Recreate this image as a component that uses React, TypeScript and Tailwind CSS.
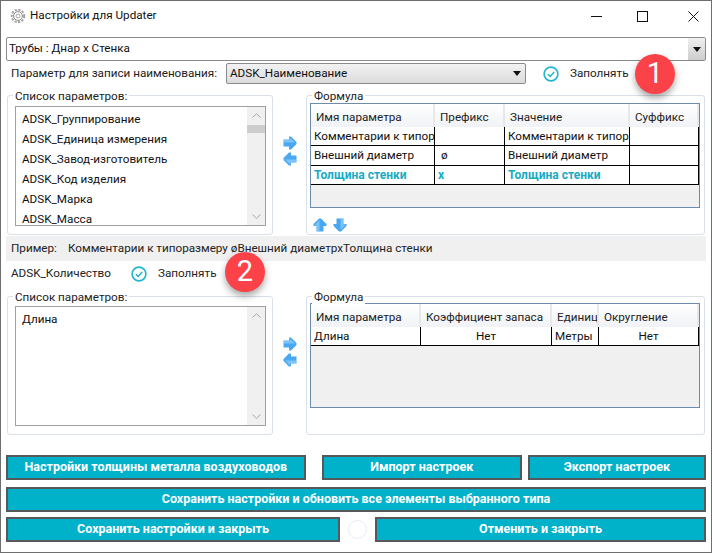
import React from "react";

type Cell = { text: string; center?: boolean };

function ArrowIcon({ rotate }: { rotate: "right" | "left" | "up" | "down" }) {
  const angle = { right: 0, left: 180, up: 270, down: 90 }[rotate];
  return (
    <svg width="14" height="14" viewBox="0 0 14 14" className="block">
      <g transform={`rotate(${angle} 7 7)`}>
        <path d="M0.5 3.5H6V0.5H8L13.5 6V8L8 13.5H6V10.5H0.5Z" fill="#4aa8f2" />
        <path d="M1 4H6.5V1.5L12 6.4H1Z" fill="#7cc4f8" />
      </g>
    </svg>
  );
}

function CheckCircle() {
  return (
    <svg width="16" height="16" viewBox="0 0 16 16" className="block shrink-0">
      <circle cx="8" cy="8" r="6.9" fill="none" stroke="#22b5cf" strokeWidth="1.6" />
      <path d="M4.8 8.2L7.2 10.4L11.2 6" fill="none" stroke="#22b5cf" strokeWidth="1.5" />
    </svg>
  );
}

function Gear() {
  return (
    <svg width="16" height="16" viewBox="0 0 16 16" className="block">
      <circle cx="8" cy="8" r="6.2" fill="none" stroke="#a0a0a0" strokeWidth="2" strokeDasharray="2.2 1.4" />
      <circle cx="8" cy="8" r="4.4" fill="none" stroke="#8a8a8a" strokeWidth="1" />
      <circle cx="8" cy="8" r="2" fill="none" stroke="#a5a5a5" strokeWidth="1" />
    </svg>
  );
}

function ComboArrow() {
  return (
    <svg width="8" height="5" viewBox="0 0 8 5" className="block">
      <path d="M0 0H8L4 5Z" fill="#111" />
    </svg>
  );
}

function Badge({ n, className }: { n: string; className: string }) {
  return (
    <div
      className={`absolute flex h-[40px] w-[40px] items-center justify-center rounded-full bg-[#fb4249] text-[29px] text-white shadow-[0_4px_7px_rgba(0,0,0,0.35)] ${className}`}
    >
      {n}
    </div>
  );
}

function GroupLabel({ children }: { children: string }) {
  return (
    <span className="absolute left-[5px] top-[-7px] bg-white px-[2px] text-[11.7px] leading-[14px] text-[#222]">
      {children}
    </span>
  );
}

function ParamList({ items, thumb }: { items: string[]; thumb?: boolean }) {
  return (
    <div className="flex h-[120px] w-[251px] overflow-hidden border border-[#a0a0a0]">
      <div className="flex-1 overflow-hidden pl-[6px] pt-[2px]">
        {items.map((item) => (
          <div key={item} className="h-[20px] text-[11.7px] leading-[20px] text-[#111]">
            {item}
          </div>
        ))}
      </div>
      <div className="flex w-[18px] flex-col items-center bg-[#f0f0f0] py-[6px]">
        <svg width="9" height="5" viewBox="0 0 9 5" className="shrink-0">
          <path d="M0.5 4.5L4.5 0.7L8.5 4.5" fill="none" stroke="#a8a8a8" />
        </svg>
        {thumb && <div className="mt-[7px] h-[8px] w-full shrink-0 bg-[#cdcdcd]" />}
        <svg width="9" height="5" viewBox="0 0 9 5" className="mt-auto shrink-0">
          <path d="M0.5 0.5L4.5 4.3L8.5 0.5" fill="none" stroke="#a8a8a8" />
        </svg>
      </div>
    </div>
  );
}

function HeaderCell({ text }: { text: string }) {
  return (
    <div className="h-[23px] overflow-hidden whitespace-nowrap border-r-2 border-[#e6e8ec] bg-gradient-to-b from-white to-[#f0f2f5] pl-[5px] text-[11.7px] leading-[27px] text-[#222]">
      {text}
    </div>
  );
}

function BodyCell({ cell, accent }: { cell: Cell; accent?: boolean }) {
  return (
    <div
      className={`h-[19.33px] overflow-hidden whitespace-nowrap border-b border-r border-black bg-white px-[3px] leading-[19px] ${
        cell.center ? "text-center" : ""
      } ${accent ? "text-[12px] font-bold text-[#17abc4]" : "text-[11.7px] text-[#111]"}`}
    >
      {cell.text}
    </div>
  );
}

function SideArrows() {
  return (
    <div className="flex w-[33px] shrink-0 flex-col items-center gap-[2px] pt-[41px]">
      <ArrowIcon rotate="right" />
      <ArrowIcon rotate="left" />
    </div>
  );
}

function ActionButton({ label, className }: { label: string; className: string }) {
  return (
    <button
      className={`h-[25px] border-2 border-[#55595c] bg-[#00b1ca] text-[12.5px] font-bold leading-none text-white ${className}`}
    >
      {label}
    </button>
  );
}

const firstRows: Cell[][] = [
  [{ text: "Комментарии к типоразмеру" }, { text: "" }, { text: "Комментарии к типоразмеру" }, { text: "" }],
  [{ text: "Внешний диаметр" }, { text: "\u00a0ø" }, { text: "Внешний диаметр" }, { text: "" }],
  [{ text: "Толщина стенки" }, { text: "x" }, { text: "Толщина стенки" }, { text: "" }],
];

const secondRow: Cell[] = [
  { text: "Длина" },
  { text: "Нет", center: true },
  { text: "Метры" },
  { text: "Нет", center: true },
];

export default function App() {
  return (
    <div
      className="relative flex h-[553px] w-[712px] flex-col overflow-hidden border border-[#6e6e6e] bg-white px-[5px]"
      style={{ fontFamily: 'Roboto, "Noto Sans", sans-serif' }}
    >
      {/* title bar */}
      <div className="flex h-[36px] shrink-0 items-center pb-[6px]">
        <div className="ml-[4px] mr-[4px]">
          <Gear />
        </div>
        <span className="text-[11.7px] text-[#111]">Настройки для Updater</span>
        <div className="ml-auto flex items-center pr-[7px]">
          <svg width="11" height="11" viewBox="0 0 11 11" className="mr-[35px]">
            <path d="M0 5.5H11" stroke="#111" />
          </svg>
          <svg width="11" height="11" viewBox="0 0 11 11" className="mr-[40px]">
            <rect x="0.5" y="0.5" width="10" height="10" fill="none" stroke="#111" />
          </svg>
          <svg width="11" height="11" viewBox="0 0 11 11">
            <path d="M0.5 0.5L10.5 10.5M10.5 0.5L0.5 10.5" stroke="#111" />
          </svg>
        </div>
      </div>

      {/* type selector */}
      <div className="flex h-[24px] shrink-0 items-center justify-between rounded-[2px] border border-[#8a8a8a] pl-[2px]">
        <span className="text-[11.7px] text-[#111]">Трубы : Днар х Стенка</span>
        <div className="flex h-full w-[17px] items-center justify-center bg-gradient-to-b from-[#f0f0f0] to-[#cdcdcd]">
          <ComboArrow />
        </div>
      </div>

      {/* name parameter row */}
      <div className="mt-[2px] flex h-[21px] shrink-0 items-center pl-[5px]">
        <span className="w-[215px] whitespace-nowrap text-[11.7px] text-[#222]">Параметр для записи наименования:</span>
        <div className="flex h-full w-[300px] items-center justify-between rounded-[2px] border border-[#8a8a8a] bg-gradient-to-b from-[#f2f2f2] to-[#dcdcdc] pl-[3px] pr-[4px]">
          <span className="text-[11.7px] text-[#111]">ADSK_Наименование</span>
          <ComboArrow />
        </div>
        <div className="ml-[17px]">
          <CheckCircle />
        </div>
        <span className="ml-[11px] text-[11.7px] text-[#222]">Заполнять</span>
      </div>

      {/* first block */}
      <div className="ml-[1px] mt-[11px] flex h-[140px] shrink-0">
        <div className="relative h-full w-[266px] shrink-0 rounded-[3px] border border-[#d9e0e8] pl-[7px] pt-[10px]">
          <GroupLabel>Список параметров:</GroupLabel>
          <ParamList
            thumb
            items={[
              "ADSK_Группирование",
              "ADSK_Единица измерения",
              "ADSK_Завод-изготовитель",
              "ADSK_Код изделия",
              "ADSK_Марка",
              "ADSK_Масса",
            ]}
          />
        </div>
        <SideArrows />
        <div className="relative h-full w-[399px] shrink-0 rounded-[3px] border border-[#d9e0e8] pl-[3px] pt-[7px]">
          <GroupLabel>Формула</GroupLabel>
          <div className="h-[105px] w-[390px] border border-[#6f8bab] bg-[#f0f0f0]">
            <div className="grid grid-cols-[124px_70px_125px_69px]">
              {["Имя параметра", "Префикс", "Значение", "Суффикс"].map((h) => (
                <HeaderCell key={h} text={h} />
              ))}
              {firstRows.map((row, i) =>
                row.map((cell, j) => <BodyCell key={`${i}-${j}`} cell={cell} accent={i === 2} />)
              )}
            </div>
          </div>
          <div className="ml-[3px] mt-[10px] flex gap-[6px]">
            <ArrowIcon rotate="up" />
            <ArrowIcon rotate="down" />
          </div>
        </div>
      </div>

      {/* example strip */}
      <div className="mt-[1px] flex h-[25px] shrink-0 items-center bg-[#f0f0f0] pl-[5px] text-[11.7px] text-[#222]">
        <span className="w-[57px]">Пример:</span>
        <span>Комментарии к типоразмеру øВнешний диаметрхТолщина стенки</span>
      </div>

      {/* quantity row */}
      <div className="flex h-[26px] shrink-0 items-center pl-[5px]">
        <span className="w-[120px] whitespace-nowrap text-[11.7px] text-[#222]">ADSK_Количество</span>
        <CheckCircle />
        <span className="ml-[11px] text-[11.7px] text-[#222]">Заполнять</span>
      </div>

      {/* second block */}
      <div className="ml-[1px] mt-[9px] flex h-[139px] shrink-0">
        <div className="relative h-full w-[266px] shrink-0 rounded-[3px] border border-[#d9e0e8] pl-[7px] pt-[9px]">
          <GroupLabel>Список параметров:</GroupLabel>
          <ParamList items={["Длина"]} />
        </div>
        <SideArrows />
        <div className="relative h-full w-[399px] shrink-0 rounded-[3px] border border-[#d9e0e8] pl-[3px] pt-[6px]">
          <GroupLabel>Формула</GroupLabel>
          <div className="h-[105px] w-[390px] border border-[#6f8bab] bg-[#f0f0f0]">
            <div className="grid grid-cols-[110px_131px_47px_100px]">
              {["Имя параметра", "Коэффициент запаса", "Единицы", "Округление"].map((h) => (
                <HeaderCell key={h} text={h} />
              ))}
              {secondRow.map((cell, j) => (
                <BodyCell key={j} cell={cell} />
              ))}
            </div>
          </div>
        </div>
      </div>

      {/* buttons */}
      <div className="mt-[20px] flex gap-[6px]">
        <ActionButton label="Настройки толщины металла воздуховодов" className="mr-[10px] w-[301px]" />
        <ActionButton label="Импорт настроек" className="w-[201px]" />
        <ActionButton label="Экспорт настроек" className="w-[179px]" />
      </div>
      <div className="mt-[7px] flex">
        <ActionButton label="Сохранить настройки и обновить все элементы выбранного типа" className="w-full" />
      </div>
      <div className="mt-[5px] flex items-center">
        <ActionButton label="Сохранить настройки и закрыть" className="w-[334px]" />
        <div className="mx-[8px] h-[19px] w-[19px] rounded-full border border-[#e6ecf5]" />
        <ActionButton label="Отменить и закрыть" className="flex-1" />
      </div>

      <Badge n="1" className="left-[634px] top-[53px]" />
      <Badge n="2" className="left-[224px] top-[251px]" />
    </div>
  );
}
